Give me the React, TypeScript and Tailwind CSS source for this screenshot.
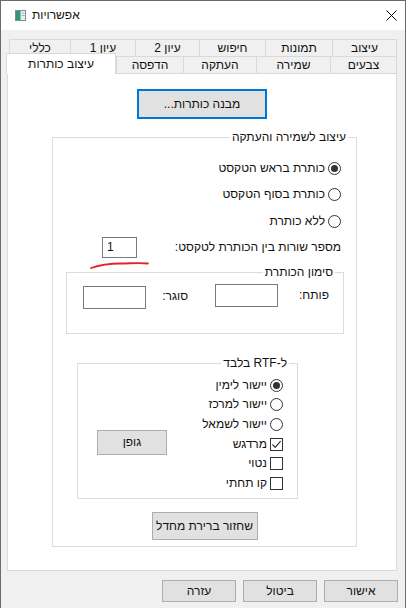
import React from "react";

const backTabs = [
  { label: "עיצוב", cls: "w-[65px] border-r" },
  { label: "תמונות", cls: "w-[67px]" },
  { label: "חיפוש", cls: "w-[66px]" },
  { label: "עיון 2", cls: "w-[64px]" },
  { label: "עיון 1", cls: "w-[65px]" },
  { label: "כללי", cls: "w-[61px]" },
];

const frontTabs = [
  { label: "צבעים", cls: "w-[67px] border-r" },
  { label: "שמירה", cls: "w-[74px]" },
  { label: "העתקה", cls: "w-[73px]" },
  { label: "הדפסה", cls: "w-[67px]" },
];

const Radio = ({ on }: { on?: boolean }) => (
  <span className="w-[13px] h-[13px] rounded-full border border-[#333333] bg-white flex items-center justify-center shrink-0">
    {on && <span className="w-[7px] h-[7px] rounded-full bg-[#333333]" />}
  </span>
);

const Check = ({ on }: { on?: boolean }) => (
  <span className="w-[13px] h-[13px] border border-[#333333] bg-white flex items-center justify-center shrink-0">
    {on && (
      <svg width="11" height="11" viewBox="0 0 11 11">
        <path d="M1.5 5.5 L4.2 8.3 L9.6 2.2" fill="none" stroke="#333333" strokeWidth="1.2" />
      </svg>
    )}
  </span>
);

const Option = ({ kind, on, label, cls }: { kind: "radio" | "check"; on?: boolean; label: string; cls: string }) => (
  <div className={`flex items-center gap-[3px] ${cls}`}>
    {kind === "radio" ? <Radio on={on} /> : <Check on={on} />}
    <span>{label}</span>
  </div>
);

const Btn = ({ label, cls }: { label: string; cls: string }) => (
  <button className={`bg-[#e1e1e1] border border-[#adadad] flex items-center justify-center ${cls}`}>
    {label}
  </button>
);

const Field = ({ cls }: { cls: string }) => (
  <span className={`bg-white border border-[#7a7a7a] ${cls}`} />
);

export default function App() {
  return (
    <div className="w-[406px] h-[608px] bg-[#f0f0f0] border-x border-t border-[#6b6b6b] flex flex-col overflow-hidden text-[12px] leading-[15px] text-[#111111] font-['Liberation_Sans',Arial,sans-serif]">
      {/* title bar */}
      <div dir="ltr" className="h-[29px] bg-white flex items-center pl-[14px] pr-[8px] shrink-0">
        <svg width="11" height="11" viewBox="0 0 11 11" className="shrink-0">
          <rect x="0.5" y="0.5" width="10" height="10" fill="#e9eef0" stroke="#7d8c96" />
          <rect x="1" y="1" width="4.5" height="9" fill="#2f9678" />
          <rect x="6.5" y="2.5" width="3" height="1" fill="#9fb3bd" />
          <rect x="6.5" y="5" width="3" height="1" fill="#9fb3bd" />
        </svg>
        <span className="ml-[6px]">אפשרויות</span>
        <svg width="11" height="11" viewBox="0 0 11 11" className="ml-auto">
          <path d="M0.5 0.5 L10.5 10.5 M10.5 0.5 L0.5 10.5" stroke="#000" strokeWidth="1" />
        </svg>
      </div>

      <div dir="rtl" className="flex flex-col pl-[6px] pr-[8px] pt-[9px]">
        {/* tabs */}
        <div className="flex h-[17px] ml-[2px]">
          {backTabs.map((t) => (
            <div key={t.label} className={`h-full border-t border-l border-[#d9d9d9] flex items-center justify-center ${t.cls}`}>
              {t.label}
            </div>
          ))}
        </div>
        <div className="flex h-[17px] items-end">
          {frontTabs.map((t) => (
            <div key={t.label} className={`h-full border-t border-l border-[#d9d9d9] flex items-center justify-center ${t.cls}`}>
              {t.label}
            </div>
          ))}
          <div className="relative z-10 w-[110px] h-[21px] -mb-[1px] -ml-[1px] bg-white border-t border-x border-[#d9d9d9] flex items-center justify-center">
            עיצוב כותרות
          </div>
        </div>

        {/* panel */}
        <div className="h-[498px] bg-white border border-[#d9d9d9] flex flex-col">
          <button className="mt-[15px] self-center w-[130px] h-[30px] bg-[#e1e1e1] border-2 border-[#0078d7] flex items-center justify-center">
            מבנה כותרות...
          </button>

          <fieldset className="mt-[11px] mr-[39px] w-[305px] border border-[#dcdcdc]">
            <legend className="mr-[8px] px-[2px]">עיצוב לשמירה והעתקה</legend>
            <div className="flex flex-col pt-[15px]">
              <div className="flex flex-col pr-[15px]">
                <Option kind="radio" on label="כותרת בראש הטקסט" cls="h-[16px]" />
                <Option kind="radio" label="כותרת בסוף הטקסט" cls="h-[16px] mt-[10px]" />
                <Option kind="radio" label="ללא כותרת" cls="h-[16px] mt-[11px]" />
              </div>
              <div className="flex items-center justify-between pr-[15px] pl-[49px] mt-[8px]">
                <span>מספר שורות בין הכותרת לטקסט:</span>
                <span className="relative">
                  <span dir="ltr" className="w-[35px] h-[21px] bg-white border border-[#7a7a7a] flex items-center pl-[4px]">1</span>
                  <svg width="60" height="9" viewBox="0 0 60 9" className="absolute left-[-12px] top-[24px]">
                    <path d="M1 7 C 10 4, 20 2.5, 30 2.5 S 50 1.5, 58 2.5" fill="none" stroke="#e3242b" strokeWidth="1.8" strokeLinecap="round" />
                  </svg>
                </span>
              </div>

              <fieldset className="mt-[7px] mr-[12px] ml-[13px] border border-[#dcdcdc]">
                <legend className="mr-[8px] px-[2px]">סימון הכותרת</legend>
                <div className="flex items-start pr-[14px] pt-[4px] pb-[24px]">
                  <span className="mt-[4px]">פותח:</span>
                  <Field cls="w-[63px] h-[23px] mr-[21px]" />
                  <span className="mt-[5px] mr-[27px]">סוגר:</span>
                  <Field cls="w-[63px] h-[23px] mr-[16px] mt-[2px]" />
                </div>
              </fieldset>

              <fieldset className="mt-[22px] mr-[58px] ml-[24px] border border-[#dcdcdc]">
                <legend className="mr-[8px] px-[2px]">ל-RTF בלבד</legend>
                <div className="flex justify-between pr-[14px] pl-[19px] pt-[4px] pb-[5px]">
                  <div className="flex flex-col">
                    <Option kind="radio" on label="יישור לימין" cls="h-[20px]" />
                    <Option kind="radio" label="יישור למרכז" cls="h-[19px]" />
                    <Option kind="radio" label="יישור לשמאל" cls="h-[20px]" />
                    <Option kind="check" on label="מרדגש" cls="h-[20px]" />
                    <Option kind="check" label="נטוי" cls="h-[19px]" />
                    <Option kind="check" label="קו תחתי" cls="h-[20px]" />
                  </div>
                  <Btn label="גופן" cls="mt-[55px] w-[70px] h-[25px]" />
                </div>
              </fieldset>

              <Btn label="שחזור ברירת מחדל" cls="mt-[13px] mb-[6px] self-center w-[106px] h-[28px]" />
            </div>
          </fieldset>
        </div>

        {/* dialog buttons */}
        <div className="flex gap-[7px] mt-[9px] -mr-[1px]">
          <Btn label="אישור" cls="w-[74px] h-[22px]" />
          <Btn label="ביטול" cls="w-[74px] h-[22px]" />
          <Btn label="עזרה" cls="w-[74px] h-[22px]" />
        </div>
      </div>
    </div>
  );
}
